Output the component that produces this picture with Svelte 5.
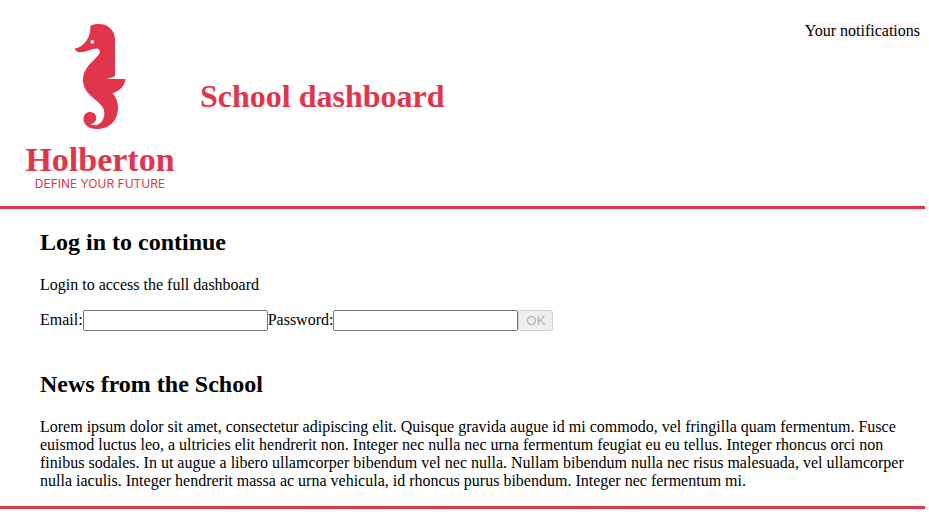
<script>
  let email = $state('');
  let password = $state('');
</script>

<div class="app">
  <div class="notifications"><p>Your notifications</p></div>

  <header>
    <svg class="logo" viewBox="0 0 200 200" role="img" aria-label="Holberton logo">
      <path
        d="M90.3 26C95 23.4 103 23.4 108 26.5C112.5 29.5 115 34 115 40V76C112 77.5 109 78.2 107 78.9H125.5C125 85 120 91 112.5 93.3C116 97 118 102 118 108C118 120 110 129 97 129C89 129 83.5 125 83.5 119C83.5 114.500 86.500 112 90 112C94 112 96.200 114.800 96.200 118C96.200 121 94 123.500 90.500 124.300C93 125.500 96.500 125.500 99 124C103 121.500 104.500 117 104.300 112C104 101 83 97 83 80C83 65 99.500 58 99.800 51.500C99.900 48.500 97 47.800 93 49C88.500 50.400 84.500 52.300 80 52.300C77.500 52.300 75.500 51 74.800 48.500C80 47.800 84 44.500 87 39.800C90 35 90.600 30 90.300 26Z"
      />
      <circle cx="92.300" cy="41.800" r="1.900" class="eye" />
      <text x="100" y="171" class="name">Holberton</text>
      <text x="100" y="188" class="motto">DEFINE YOUR FUTURE</text>
    </svg>
    <h1>School dashboard</h1>
  </header>

  <main>
    <section>
      <h2>Log in to continue</h2>
      <p>Login to access the full dashboard</p>
      <form onsubmit={(event) => event.preventDefault()}>
        <label for="email">Email:</label>
        <input id="email" type="email" bind:value={email} />
        <label for="password">Password:</label>
        <input id="password" type="password" bind:value={password} />
        <button type="submit" disabled={!email || !password}>OK</button>
      </form>
    </section>

    <section class="news">
      <h2>News from the School</h2>
      <p>
        Lorem ipsum dolor sit amet, consectetur adipiscing elit. Quisque gravida augue id mi commodo,
        vel fringilla quam fermentum. Fusce euismod luctus leo, a ultricies elit hendrerit non. Integer
        nec nulla nec urna fermentum feugiat eu eu tellus. Integer rhoncus orci non finibus sodales. In
        ut augue a libero ullamcorper bibendum vel nec nulla. Nullam bibendum nulla nec risus
        malesuada, vel ullamcorper nulla iaculis. Integer hendrerit massa ac urna vehicula, id rhoncus
        purus bibendum. Integer nec fermentum mi.
      </p>
    </section>
  </main>

  <footer></footer>
</div>

<style>
  :global(body) {
    margin: 0;
    background: #fff;
  }

  .app {
    position: relative;
    margin-right: 4px;
    color: #000;
    font: 16px/18px 'Liberation Serif', 'Times New Roman', serif;
  }

  h1,
  h2,
  p {
    margin: 0;
  }

  .notifications {
    position: absolute;
    top: 22px;
    right: 5px;
    background: #fff8f8;
  }

  header {
    display: flex;
    align-items: center;
    padding-bottom: 6px;
    border-bottom: 3px solid #e1354b;
  }

  .logo {
    flex: none;
    width: 200px;
    height: 200px;
    fill: #e1354b;
  }

  .eye {
    fill: #fff;
  }

  .name {
    font: bold 34px 'Liberation Serif', serif;
    text-anchor: middle;
  }

  .motto {
    font: 12px Inter, sans-serif;
    text-anchor: middle;
  }

  h1 {
    padding-bottom: 8px;
    color: #e1354b;
    font-size: 32px;
    line-height: 36px;
  }

  main {
    padding: 20px 16px 16px 40px;
  }

  h2 {
    margin-bottom: 20px;
    font-size: 24px;
    line-height: 27px;
  }

  form {
    display: flex;
    align-items: baseline;
    margin-top: 16px;
  }

  input,
  button {
    box-sizing: border-box;
    height: 21px;
    margin: 0;
  }

  input {
    width: 185px;
  }

  button {
    width: 35px;
    padding: 0;
  }

  .news {
    margin-top: 40px;
  }

  footer {
    border-top: 3px solid #e1354b;
  }
</style>
